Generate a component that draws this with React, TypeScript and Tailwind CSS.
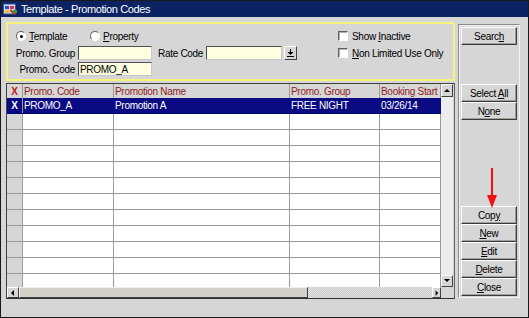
import React from 'react';

const rows = [
  { code: 'PROMO_A', name: 'Promotion A', group: 'FREE NIGHT', start: '03/26/14', selected: true },
  ...Array.from({ length: 11 }, () => ({ code: '', name: '', group: '', start: '', selected: false })),
];

const Btn = ({ children, className = '' }: { children: React.ReactNode; className?: string }) => (
  <div
    className={`flex h-[18px] items-center justify-center border border-t-white border-l-white border-r-[#3a3a3a] border-b-[#3a3a3a] bg-[#d6d6d6] text-black shadow-[inset_-1px_-1px_0_#a0a0a0] ${className}`}
  >
    <span className="whitespace-pre">{children}</span>
  </div>
);

const Radio = ({ checked }: { checked?: boolean }) => (
  <span className="relative inline-block h-[10px] w-[10px] rounded-full border border-t-[#606060] border-l-[#606060] border-r-white border-b-white bg-white">
    {checked && <span className="absolute left-[2.5px] top-[2.5px] h-[3px] w-[3px] rounded-full bg-black" />}
  </span>
);

const Check = () => (
  <span className="inline-block h-[10px] w-[10px] border border-t-[#606060] border-l-[#606060] border-r-white border-b-white bg-white shadow-[inset_1px_1px_0_#b0b0b0]" />
);

const Field = ({ value = '', w }: { value?: string; w: string }) => (
  <div
    className={`${w} flex h-[14px] items-center border border-t-[#505050] border-l-[#505050] border-r-[#c8c8c8] border-b-[#c8c8c8] bg-[#ffffe1] pl-[1px] text-black`}
  >
    {value}
  </div>
);

const Tri = ({ dir }: { dir: 'up' | 'down' | 'left' | 'right' }) => {
  const pts = {
    up: '1,5 4,2 7,5',
    down: '1,2 4,5 7,2',
    left: '5,1 2,4 5,7',
    right: '3,1 6,4 3,7',
  }[dir];
  return (
    <svg width="8" height="8" viewBox="0 0 8 8">
      <polygon points={pts} fill="#000" />
    </svg>
  );
};

const ScrollBtn = ({ dir, className = '' }: { dir: 'up' | 'down' | 'left' | 'right'; className?: string }) => (
  <div
    className={`flex items-center justify-center border border-t-white border-l-white border-r-[#404040] border-b-[#404040] bg-[#d6d6d6] ${className}`}
  >
    <Tri dir={dir} />
  </div>
);

export default function App() {
  return (
    <div className="relative h-[318px] w-[529px] overflow-hidden whitespace-nowrap border border-[#1a1a1a] bg-[#d6d6d6] font-['Liberation_Sans',Arial,sans-serif] text-[10px] tracking-[-0.3px] text-black">
      {/* title bar */}
      <div className="flex h-[16px] items-center bg-[#0b2263] pl-[2px] text-white">
        <svg width="15" height="13" viewBox="0 0 15 13">
          <rect x="0.5" y="1" width="12" height="10" fill="#d8d8e8" stroke="#3050a0" strokeWidth="1" />
          <rect x="2" y="3" width="4" height="3" fill="#2050c0" />
          <rect x="7" y="3" width="4" height="3" fill="#e03030" />
          <rect x="2" y="7" width="4" height="3" fill="#f0c020" />
          <path d="M8 6 L13 12 L11 12 L7 8 Z" fill="#d02020" />
          <rect x="10" y="7" width="4" height="3" fill="#30a030" />
        </svg>
        <span className="ml-[3px] text-[11px] tracking-[-0.4px]">Template - Promotion Codes</span>
      </div>

      <div className="flex pl-[5px] pt-[5px]">
        <div className="flex w-[449px] flex-col">
          {/* filter panel */}
          <div className="flex h-[59px] border-2 border-[#f4f47c]">
            <div className="flex w-[330px] flex-col">
              <div className="mt-[6px] flex h-[12px] items-center pl-[8px]">
                <div className="flex w-[74px] items-center">
                  <Radio checked />
                  <span className="ml-[3px]">
                    <span className="underline">T</span>emplate
                  </span>
                </div>
                <Radio />
                <span className="ml-[3px]">
                  <span className="underline">P</span>roperty
                </span>
              </div>
              <div className="mt-[4px] flex h-[14px] items-center">
                <span className="w-[67px] text-right">Promo. Group</span>
                <div className="ml-[3px]">
                  <Field w="w-[74px]" />
                </div>
                <span className="ml-[6px] w-[45px]">Rate Code</span>
                <div className="ml-[3px]">
                  <Field w="w-[76px]" />
                </div>
                <div className="ml-[2px] flex h-[14px] w-[13px] items-center justify-center border border-t-white border-l-white border-r-[#404040] border-b-[#404040] bg-[#d6d6d6]">
                  <svg width="7" height="8" viewBox="0 0 7 8">
                    <rect x="3" y="0" width="1" height="3" fill="#000" />
                    <polygon points="0.5,3 6.5,3 3.5,6" fill="#000" />
                    <rect x="0" y="7" width="7" height="1" fill="#000" />
                  </svg>
                </div>
              </div>
              <div className="mt-[2px] flex h-[14px] items-center">
                <span className="w-[67px] text-right">Promo. Code</span>
                <div className="ml-[3px]">
                  <Field w="w-[74px]" value="PROMO_A" />
                </div>
              </div>
            </div>
            <div className="flex flex-col pt-[7px]">
              <div className="flex h-[10px] items-center">
                <Check />
                <span className="ml-[4px]">
                  Show <span className="underline">I</span>nactive
                </span>
              </div>
              <div className="mt-[7px] flex h-[10px] items-center">
                <Check />
                <span className="ml-[4px]">
                  <span className="underline">N</span>on Limited Use Only
                </span>
              </div>
            </div>
          </div>

          {/* grid */}
          <div className="mt-[2px] flex h-[216px] flex-col border border-t-[#404040] border-l-[#404040] border-r-[#606060] border-b-[#303030]">
            <div className="flex">
              <div className="flex w-[434px] flex-col overflow-hidden">
                <div className="flex h-[14px] bg-[#d6d6d6] text-[#8e1c1c]">
                  <div className="flex w-[16px] shrink-0 items-center justify-center border-r border-[#9a9a9a] font-bold text-[#c01818]">X</div>
                  <div className="flex w-[91px] shrink-0 items-center border-r border-[#9a9a9a] pl-[1px]">Promo. Code</div>
                  <div className="flex w-[176px] shrink-0 items-center border-r border-[#9a9a9a] pl-[1px]">Promotion Name</div>
                  <div className="flex w-[90px] shrink-0 items-center border-r border-[#9a9a9a] pl-[1px]">Promo. Group</div>
                  <div className="flex w-[61px] shrink-0 items-center overflow-hidden border-r border-[#9a9a9a] pl-[1px]">Booking Start</div>
                </div>
                <div className="h-[189px] overflow-hidden">
                  {rows.map((r, i) => (
                    <div
                      key={i}
                      className={`flex h-[16px] border-b ${r.selected ? 'border-[#000070] bg-[#0a0a82] text-white' : 'border-[#9a9a9a] bg-white'}`}
                    >
                      <div
                        className={`flex w-[16px] shrink-0 items-center justify-center border-r border-[#9a9a9a] font-bold ${r.selected ? 'bg-[#0a0a82] text-white' : 'bg-[#d6d6d6]'}`}
                      >
                        {r.selected ? 'X' : ''}
                      </div>
                      <div className={`flex w-[91px] shrink-0 items-center border-r pl-[1px] ${r.selected ? 'border-[#0a0a82]' : 'border-[#9a9a9a]'}`}>{r.code}</div>
                      <div className={`flex w-[176px] shrink-0 items-center border-r pl-[1px] ${r.selected ? 'border-[#0a0a82]' : 'border-[#9a9a9a]'}`}>{r.name}</div>
                      <div className={`flex w-[90px] shrink-0 items-center border-r pl-[1px] ${r.selected ? 'border-[#0a0a82]' : 'border-[#9a9a9a]'}`}>{r.group}</div>
                      <div className={`flex w-[61px] shrink-0 items-center border-r pl-[1px] ${r.selected ? 'border-[#0a0a82]' : 'border-[#9a9a9a]'}`}>{r.start}</div>
                    </div>
                  ))}
                </div>
              </div>
              {/* vertical scrollbar */}
              <div className="flex w-[12px] flex-col bg-[#ececec]">
                <ScrollBtn dir="up" className="h-[13px]" />
                <div className="flex-1" />
                <ScrollBtn dir="down" className="h-[12px]" />
              </div>
            </div>
            {/* horizontal scrollbar */}
            <div className="flex h-[11px]">
              <ScrollBtn dir="left" className="w-[12px]" />
              <div className="w-[289px] border border-t-[#eeeeee] border-l-[#eeeeee] border-r-[#404040] border-b-[#404040] bg-[#d3cfc9]" />
              <div className="w-[124px] bg-[repeating-conic-gradient(#e4e4e4_0_25%,#c8c8c8_0_50%)] bg-[length:2px_2px]" />
              <ScrollBtn dir="right" className="w-[9px]" />
            </div>
          </div>
        </div>

        {/* right button panel */}
        <div className="ml-[3px] mt-[2px] flex h-[274px] w-[62px] flex-col border border-t-[#8a8a8a] border-l-[#8a8a8a] border-r-[#f4f4f4] border-b-[#f4f4f4] px-[2px] pt-[2px] shadow-[inset_1px_1px_0_#f4f4f4]">
          <Btn>
            Searc<span className="underline">h</span>
          </Btn>
          <Btn className="mt-[39px]">
            Select <span className="underline">A</span>ll
          </Btn>
          <Btn>
            N<span className="underline">o</span>ne
          </Btn>
          <div className="flex-1" />
          <Btn>
            Cop<span className="underline">y</span>
          </Btn>
          <Btn>
            <span className="underline">N</span>ew
          </Btn>
          <Btn>
            <span className="underline">E</span>dit
          </Btn>
          <Btn>
            <span className="underline">D</span>elete
          </Btn>
          <Btn className="mb-[1px]">
            <span className="underline">C</span>lose
          </Btn>
        </div>
      </div>

      {/* red annotation arrow */}
      <svg className="absolute left-[485px] top-[167px]" width="12" height="42" viewBox="0 0 12 42">
        <rect x="5" y="0" width="2" height="28" fill="#f01010" />
        <polygon points="1,27 11,27 6,40" fill="#f01010" />
      </svg>
    </div>
  );
}
